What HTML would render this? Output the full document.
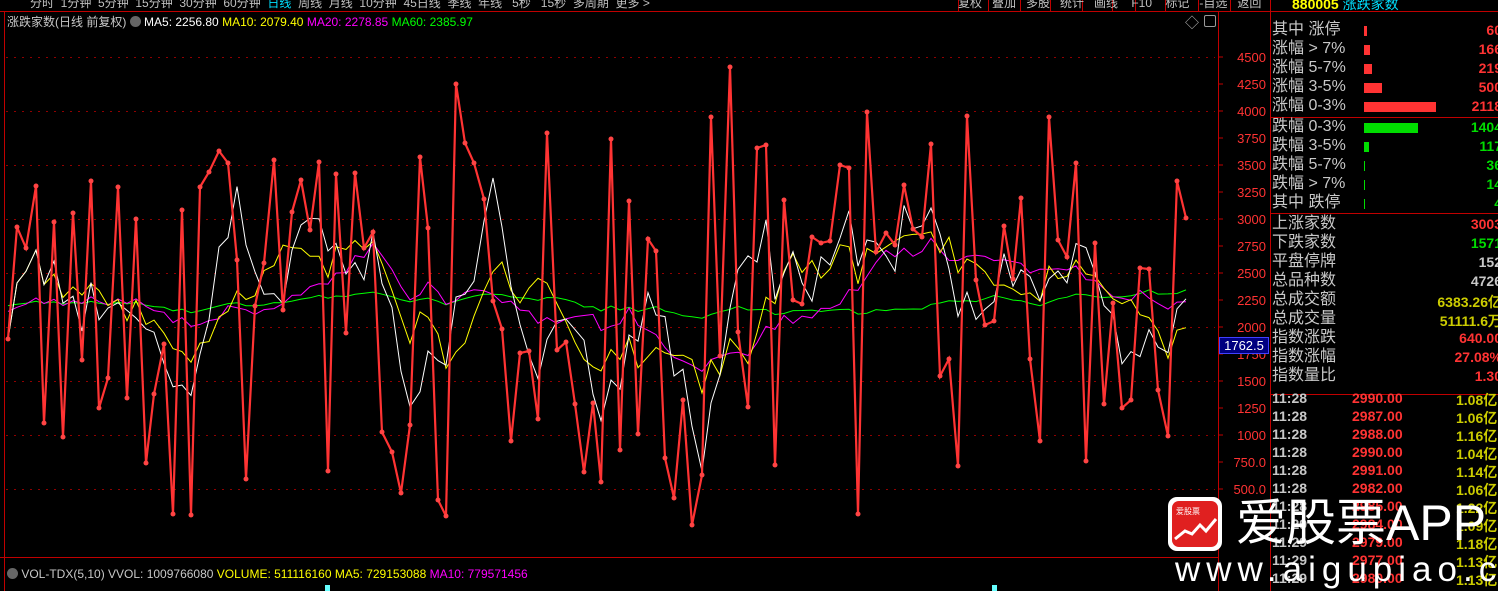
<!DOCTYPE html>
<html><head><meta charset="utf-8"><style>
body{margin:0;background:#000;width:1498px;height:591px;overflow:hidden;position:relative;font-family:"Liberation Sans","Noto Sans CJK SC",sans-serif;}
.abs{position:absolute;white-space:nowrap}
.tb{color:#c0c0c0;font-size:12px;top:-6px}
.rp{font-size:16px;color:#c8c8c8;left:1272px;line-height:18px}
.num{position:absolute;right:-4px;font-family:"Liberation Sans",sans-serif;font-weight:bold;font-size:14px}
.ax{position:absolute;left:1226px;width:40px;text-align:right;color:#ff3333;font-size:13px}
.bar{position:absolute;left:1364px;height:10px}
</style></head><body>
<svg id="s" class="abs" style="left:0;top:0" width="1498" height="591"></svg>
<div class="abs tb" style="left:30px;">分时&nbsp;&nbsp;1分钟&nbsp;&nbsp;5分钟&nbsp;&nbsp;15分钟&nbsp;&nbsp;30分钟&nbsp;&nbsp;60分钟&nbsp;&nbsp;<span style="color:#00e0ff">日线</span>&nbsp;&nbsp;周线&nbsp;&nbsp;月线&nbsp;&nbsp;10分钟&nbsp;&nbsp;45日线&nbsp;&nbsp;季线&nbsp;&nbsp;年线&nbsp;&nbsp;&nbsp;5秒&nbsp;&nbsp;&nbsp;15秒&nbsp;&nbsp;多周期&nbsp;&nbsp;更多 ></div>
<div class="abs tb" style="left:958px;">复权&nbsp;&nbsp;&nbsp;叠加&nbsp;&nbsp;&nbsp;多股&nbsp;&nbsp;&nbsp;统计&nbsp;&nbsp;&nbsp;画线&nbsp;&nbsp;&nbsp;&nbsp;F10&nbsp;&nbsp;&nbsp;&nbsp;标记&nbsp;&nbsp;&nbsp;-自选&nbsp;&nbsp;&nbsp;返回</div>
<div class="abs" style="left:1292px;top:-6px;font-size:14px;"><span style="color:#ffff00;font-weight:bold">880005</span> <span style="color:#00e0ff">涨跌家数</span></div>
<div class="abs" style="left:7px;top:13px;font-size:12px;color:#c8c8c8">涨跌家数(日线 前复权) <span style="display:inline-block;width:11px;height:11px;border-radius:6px;background:#666;vertical-align:-1px"></span> <span style="color:#fff">MA5: 2256.80</span> <span style="color:#ffff00">MA10: 2079.40</span> <span style="color:#ff00ff">MA20: 2278.85</span> <span style="color:#00ff00">MA60: 2385.97</span></div>
<div class="abs" style="left:7px;top:567px;font-size:12px;color:#c8c8c8"><span style="display:inline-block;width:11px;height:11px;border-radius:6px;background:#666;vertical-align:-1px"></span> VOL-TDX(5,10) VVOL: 1009766080 <span style="color:#ffff00">VOLUME: 511116160 MA5: 729153088</span> <span style="color:#ff00ff">MA10: 779571456</span></div>
<div class="abs" style="left:1185px;top:13px;color:#aaa;font-size:14px">◇</div>
<div class="abs" style="left:1204px;top:15px;width:10px;height:10px;border:1px solid #999;border-radius:2px"></div>
<div id="ax"></div>
<div class="abs" style="left:1219px;top:337px;width:48px;height:15px;background:#000080;border:1px solid #4040ff;color:#fff;font-size:13px;line-height:15px;text-align:center">1762.5</div>
<div id="rp"></div>
<div class="abs" style="left:1168px;top:497px;width:54px;height:54px;background:#fff;border-radius:9px"></div>
<div class="abs" style="left:1172px;top:501px;width:46px;height:46px;background:#e02020;border-radius:7px;overflow:hidden">
<div style="color:#fff;font-size:8px;margin:5px 0 0 4px">爱股票</div>
<svg width="46" height="46" style="position:absolute;left:0;top:0"><polyline points="3,38 13,30 20,33 28,24 34,30 44,18" fill="none" stroke="#fff" stroke-width="3"/></svg></div>
<div class="abs" style="left:1236px;top:493px;font-size:50px;color:#fff;line-height:60px">爱股票APP</div>
<div class="abs" style="left:1175px;top:550px;font-size:35px;color:#fff;letter-spacing:6px;line-height:40px">www.aigupiao.com</div>
<script>
const s=document.getElementById('s');let h='';
const L=(x1,y1,x2,y2,c,w,d)=>h+=`<line x1="${x1}" y1="${y1}" x2="${x2}" y2="${y2}" stroke="${c}" stroke-width="${w||1}" ${d?'stroke-dasharray="'+d+'"':''}/>`;
L(0,11.5,1498,11.5,'#c00000');L(4.5,11,4.5,591,'#c00000');L(1218.5,11,1218.5,591,'#c00000');L(1270.5,0,1270.5,591,'#c00000');
L(0,557.5,1218,557.5,'#c00000');L(1270,11.5,1498,11.5,'#c00000');
L(1270,117.5,1498,117.5,'#c00000');L(1270,213.5,1498,213.5,'#c00000');L(1270,394.5,1498,394.5,'#c00000');
[958,988,1020,1050,1082,1112,1135,1165,1198,1230].forEach(x=>L(x+.5,0,x+.5,11,'#c00000'));
const Y=v=>57+(4500-v)*0.108;
let ax='';
for(let v=4500;v>=500;v-=250){const y=Y(v);L(1218,y,1223,y,'#c00000');
 if(v%500==0)L(6,y+.5,1215,y+.5,'#900000',1,'2,6');
 ax+=`<div class="ax" style="top:${y-7}px">${v>=1000?v:v.toFixed(1)}</div>`;}
document.getElementById('ax').innerHTML=ax;
const P=[[8,339],[17,227],[26,248],[36,186],[44,423],[54,222],[63,437],[73,213],[82,360],[91,181],[99,408],[108,378],[118,187],[127,398],[136,219],[146,463],[154,394],[164,344],[173,514],[182,210],[191,515],[200,187],[209,172],[219,151],[228,163],[237,260],[246,479],[255,306],[264,263],[274,160],[283,310],[292,212],[301,180],[310,230],[319,162],[328,471],[336,174],[346,333],[355,173],[364,248],[373,232],[382,432],[392,452],[401,493],[410,425],[420,157],[428,228],[438,500],[446,516],[456,84],[465,143],[474,163],[484,199],[493,301],[502,329],[511,441],[520,353],[529,351],[538,419],[547,133],[557,350],[566,342],[575,404],[584,472],[593,403],[601,482],[611,139],[620,450],[629,201],[638,434],[648,239],[656,251],[665,458],[674,498],[683,400],[692,525],[702,475],[711,117],[720,356],[730,67],[738,332],[748,407],[757,148],[766,145],[775,465],[784,200],[793,300],[802,304],[812,237],[821,243],[830,241],[840,165],[849,168],[858,514],[867,112],[876,252],[886,233],[895,245],[904,185],[913,229],[922,237],[931,144],[940,376],[949,359],[958,466],[967,116],[976,280],[985,325],[994,321],[1004,226],[1013,279],[1021,198],[1030,359],[1040,441],[1049,117],[1058,240],[1067,257],[1076,163],[1086,461],[1095,243],[1104,404],[1113,303],[1122,408],[1131,400],[1140,268],[1149,269],[1158,390],[1168,436],[1177,181],[1186,218]];
function ma(n,c,base){let pts=[];for(let i=0;i<P.length;i++){let a=Math.max(0,i-n+1),sum=0;for(let j=a;j<=i;j++)sum+=P[j][1];let m=sum/(i-a+1);if(base){let k=(i-a+1)/n;m=m*k+base*(1-k);}pts.push(P[i][0]+','+m.toFixed(1));}
 h+=`<polyline points="${pts.join(' ')}" fill="none" stroke="${c}" stroke-width="1"/>`;}
ma(60,'#00ff00',305);ma(20,'#ff00ff',310);ma(10,'#ffff00');ma(5,'#ffffff');
h+=`<polyline points="${P.map(p=>p.join(',')).join(' ')}" fill="none" stroke="#ff3333" stroke-width="2.2"/>`;
P.forEach(p=>h+=`<circle cx="${p[0]}" cy="${p[1]}" r="2.5" fill="#ff4444"/>`);
h+=`<rect x="325" y="585" width="5" height="6" fill="#66ffff"/><rect x="992" y="585" width="5" height="6" fill="#66ffff"/>`;
s.innerHTML=h;
let r='';
const rows=[['其中 涨停',3,'#ff3333','60'],['涨幅 > 7%',6,'#ff3333','166'],['涨幅 5-7%',8,'#ff3333','219'],['涨幅 3-5%',18,'#ff3333','500'],['涨幅 0-3%',72,'#ff3333','2118']];
rows.forEach((q,i)=>{let y=21+i*19;r+=`<div class="abs rp" style="top:${y}px">${q[0]}</div><div class="bar" style="top:${y+5}px;width:${q[1]}px;background:${q[2]}"></div><div class="abs num" style="top:${y+1}px;color:${q[2]}">${q[3]}</div>`;});
const rows2=[['跌幅 0-3%',54,'1404'],['跌幅 3-5%',5,'117'],['跌幅 5-7%',1,'36'],['跌幅 > 7%',1,'14'],['其中 跌停',1,'4']];
rows2.forEach((q,i)=>{let y=118+i*19;r+=`<div class="abs rp" style="top:${y}px">${q[0]}</div><div class="bar" style="top:${y+5}px;width:${q[1]}px;background:#00dd00"></div><div class="abs num" style="top:${y+1}px;color:#00dd00">${q[2]}</div>`;});
const rows3=[['上涨家数','#ff3333','3003'],['下跌家数','#00dd00','1571'],['平盘停牌','#c8c8c8','152'],['总品种数','#c8c8c8','4726'],['总成交额','#cccc00','6383.26亿'],['总成交量','#cccc00','51111.6万'],['指数涨跌','#ff3333','640.00'],['指数涨幅','#ff3333','27.08%'],['指数量比','#ff3333','1.30']];
rows3.forEach((q,i)=>{let y=215+i*19;r+=`<div class="abs rp" style="top:${y}px">${q[0]}</div><div class="abs num" style="top:${y+1}px;color:${q[1]}">${q[2]}</div>`;});
const tr=[['11:28','2990.00','1.08'],['11:28','2987.00','1.06'],['11:28','2988.00','1.16'],['11:28','2990.00','1.04'],['11:28','2991.00','1.14'],['11:28','2982.00','1.06'],['11:28','2985.00','1.22'],['11:29','2984.00','1.09'],['11:29','2979.00','1.18'],['11:29','2977.00','1.13'],['11:29','2980.00','1.13']];
tr.forEach((q,i)=>{let y=390+i*18;r+=`<div class="abs" style="left:1272px;top:${y}px;color:#c8c8c8;font-weight:bold;font-size:14px">${q[0]}</div><div class="abs" style="left:1352px;top:${y}px;color:#ff3333;font-weight:bold;font-size:14px">${q[1]}</div><div class="abs" style="left:1456px;top:${y}px;color:#cccc00;font-weight:bold;font-size:14px">${q[2]}亿</div>`;});
document.getElementById('rp').innerHTML=r;
</script>
</body></html>
